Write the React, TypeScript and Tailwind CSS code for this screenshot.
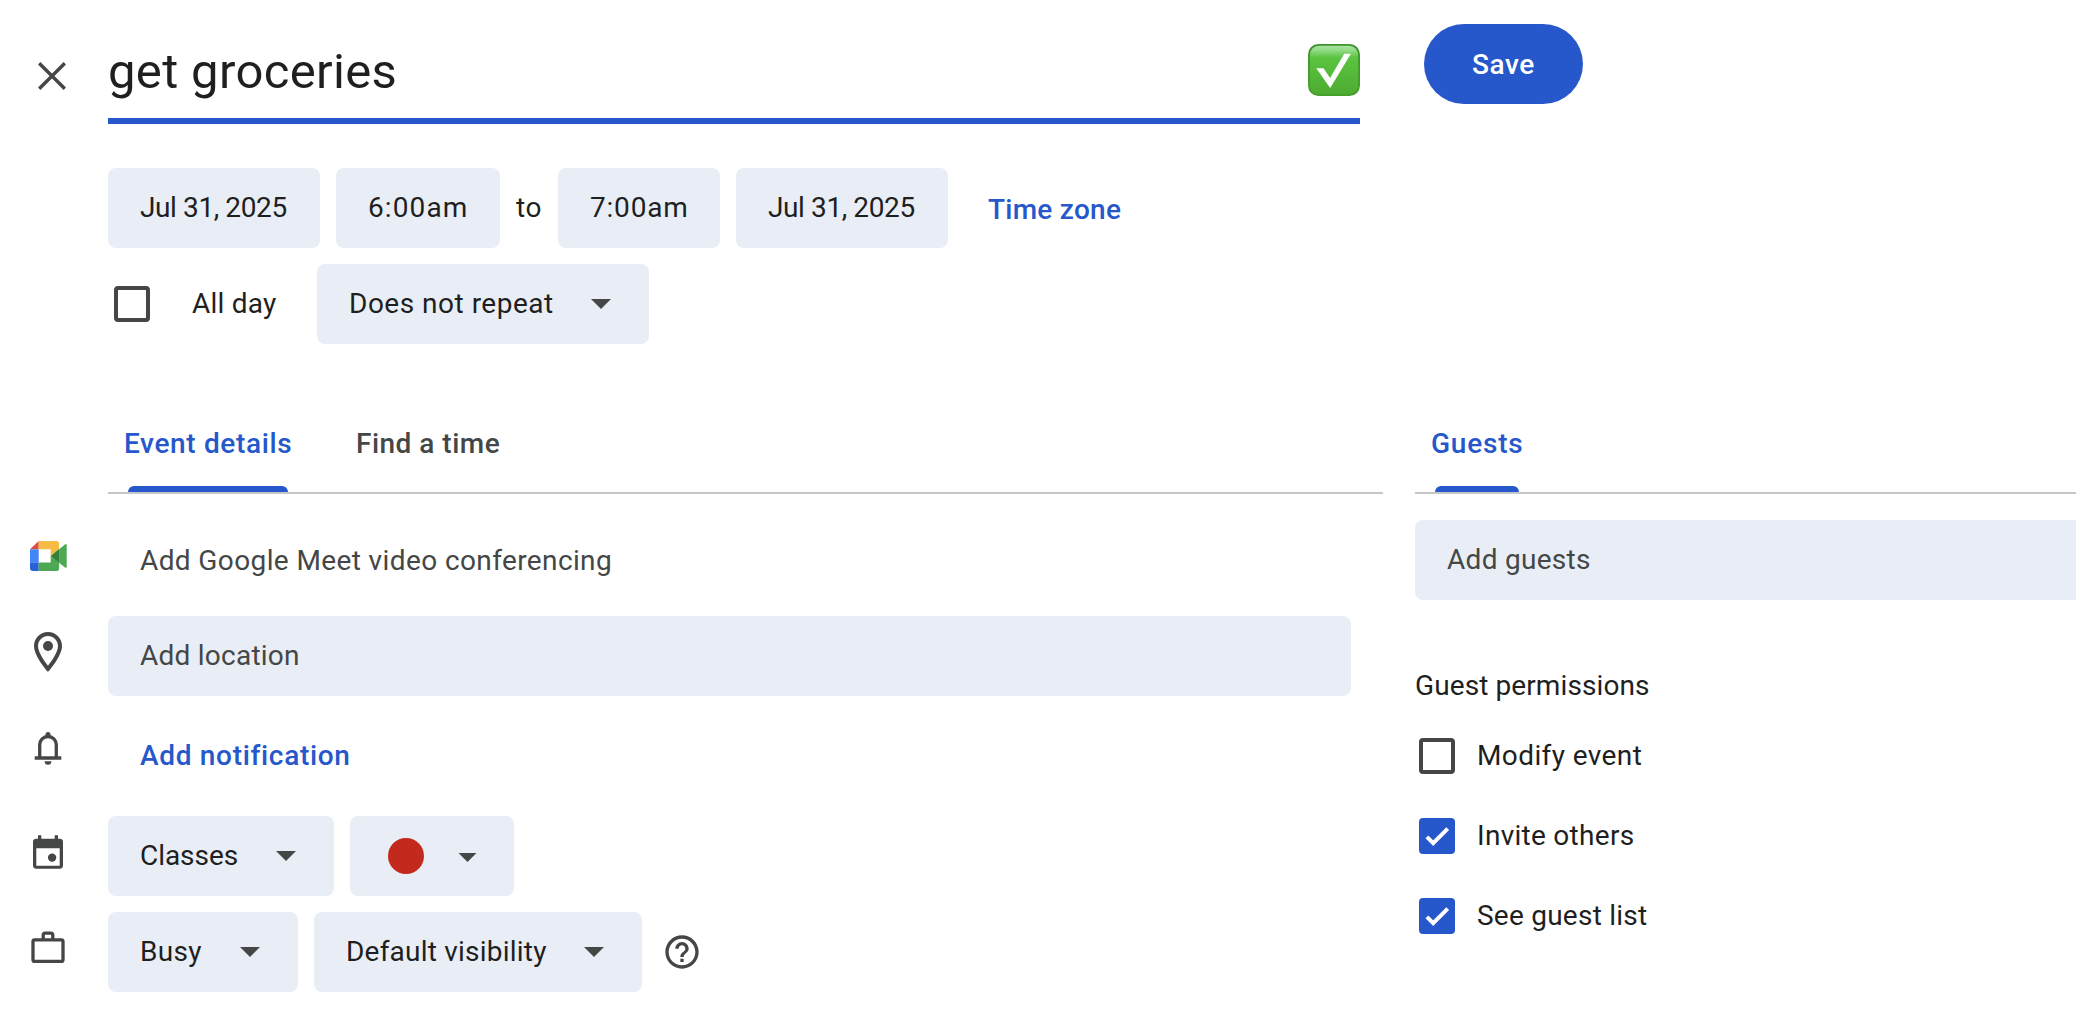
import type { ReactNode } from 'react';

function CloseIcon() {
  return (
    <svg className="size-10" viewBox="0 0 40 40" fill="none" stroke="#444746" strokeWidth="3.4">
      <path d="M7.2 7.2 32.8 32.8M32.8 7.2 7.2 32.8" />
    </svg>
  );
}

function CheckEmoji() {
  return (
    <svg className="size-[52px]" viewBox="0 0 52 52" role="img" aria-label="Completed">
      <defs>
        <linearGradient id="emojiFill" x1="0" y1="0" x2="0" y2="1">
          <stop offset="0" stopColor="#a5e3a0" />
          <stop offset="0.09" stopColor="#93dc88" />
          <stop offset="0.24" stopColor="#5bc440" />
          <stop offset="1" stopColor="#4dab31" />
        </linearGradient>
        <linearGradient id="emojiEdge" x1="0" y1="0" x2="0" y2="1">
          <stop offset="0" stopColor="#3f922c" />
          <stop offset="1" stopColor="#469f2b" />
        </linearGradient>
      </defs>
      <rect width="52" height="52" rx="10.5" fill="url(#emojiEdge)" />
      <rect x="1.8" y="1.8" width="48.4" height="48.4" rx="9" fill="url(#emojiFill)" />
      <path d="M8.3 24.2h7.2l6.6 9.8L36.2 9.8h6.7L22.2 44z" fill="#fff" />
    </svg>
  );
}

function MeetIcon() {
  return (
    <svg className="m-1 size-10" viewBox="0 0 40 40">
      <path d="M2 13.3 10.7 5v8.3z" fill="#dd4b3e" />
      <path d="M2 13.3h8.7v13.3H2z" fill="#4285f4" />
      <path d="M2 26.6h8.7V35H5a3 3 0 0 1-3-3z" fill="#2862d6" />
      <path d="M10.7 5h17.6a2.8 2.8 0 0 1 2.8 2.8v5.4L22.7 20v-6.7h-12z" fill="#f6bb42" />
      <path d="M10.7 26.6h12V20l8.4 6.8v5.4a2.8 2.8 0 0 1-2.8 2.8H10.7z" fill="#4ca853" />
      <path d="M22.7 20 31.1 13v14z" fill="#34803b" />
      <path d="M31.1 13.2 37 8.4q1.7-1 1.7 1v21.200q0 2-1.7 1l-5.900-4.800z" fill="#4ca853" />
    </svg>
  );
}

function PinIcon() {
  return (
    <svg className="size-12" viewBox="0 0 24 24" fill="#444746">
      <path d="M12 2C8.130 2 5 5.130 5 9c0 5.250 7 13 7 13s7-7.750 7-13c0-3.870-3.130-7-7-7zM7 9c0-2.760 2.240-5 5-5s5 2.240 5 5c0 2.880-2.880 7.190-5 9.880C9.920 16.210 7 11.850 7 9z" />
      <circle cx="12" cy="9" r="2.5" />
    </svg>
  );
}

function BellIcon() {
  return (
    <svg className="m-1 size-10" viewBox="0 0 40 40" fill="#444746">
      <path d="M11.700 29V16.800a8.300 8.300 0 0 1 16.600 0V29" fill="none" stroke="#444746" strokeWidth="3.3" />
      <path d="M6.700 28.300h26.600v3.400H6.700zM17.500 9V6.500a2.500 2.500 0 0 1 5 0V9zM16.600 33.300h6.800a3.400 3.400 0 0 1-6.800 0z" />
    </svg>
  );
}

function CalendarIcon() {
  return (
    <svg className="m-1 size-10" viewBox="0 0 40 40" fill="#444746">
      <path
        fillRule="evenodd"
        d="M10 3.300h3.300v3.400h13.400V3.300H30v3.400h1.700A3.300 3.300 0 0 1 35 10v23.300a3.300 3.300 0 0 1-3.300 3.400H8.300A3.300 3.300 0 0 1 5 33.300V10a3.300 3.300 0 0 1 3.300-3.300H10zM8.300 16.300v17.400h23.400V16.300z"
      />
      <circle cx="24.1" cy="25.6" r="4.2" />
    </svg>
  );
}

function BriefcaseIcon() {
  return (
    <svg className="m-1 size-10" viewBox="0 0 40 40" fill="none" stroke="#444746" strokeWidth="3.3">
      <rect x="5" y="11.8" width="30" height="21.6" rx="1.7" />
      <path d="M15.200 11.500V7.200q0-2 2-2h5.600q2 0 2 2v4.300" />
    </svg>
  );
}

function HelpIcon() {
  return (
    <svg className="size-10" viewBox="0 0 24 24" fill="#444746">
      <path d="M11 18h2v-2h-2v2zm1-16C6.480 2 2 6.480 2 12s4.480 10 10 10 10-4.480 10-10S17.520 2 12 2zm0 18c-4.410 0-8-3.590-8-8s3.590-8 8-8 8 3.590 8 8-3.590 8-8 8zm0-14c-2.210 0-4 1.790-4 4h2c0-1.100.9-2 2-2s2 .9 2 2c0 2-3 1.750-3 5h2c0-2.250 3-2.500 3-5 0-2.210-1.790-4-4-4z" />
    </svg>
  );
}

function Caret({ small = false }: { small?: boolean }) {
  return small ? (
    <svg className="mt-[2px] h-[9px] w-[19px]" viewBox="0 0 20 10" fill="#444746">
      <path d="M0 0h20L10 10z" />
    </svg>
  ) : (
    <svg className="h-[10px] w-5" viewBox="0 0 20 10" fill="#444746">
      <path d="M0 0h20L10 10z" />
    </svg>
  );
}

function Chip({ className, children }: { className: string; children: ReactNode }) {
  return (
    <button className={`flex h-20 shrink-0 items-center rounded-lg bg-[#e9eef6] whitespace-nowrap ${className}`}>
      {children}
    </button>
  );
}

function Checkbox({ checked = false }: { checked?: boolean }) {
  return checked ? (
    <span className="flex size-9 shrink-0 items-center justify-center rounded-[4px] bg-[#2657cb]">
      <svg className="size-9" viewBox="0 0 36 36" fill="none" stroke="#fff" strokeWidth="4">
        <path d="m7.900 18.800 6.300 6.300L28.700 10.600" />
      </svg>
    </span>
  ) : (
    <span className="size-9 shrink-0 rounded-[4px] border-4 border-[#444746]" />
  );
}

function DetailRow({ icon, children, className = 'h-20' }: { icon: ReactNode; children: ReactNode; className?: string }) {
  return (
    <div className={`flex ${className}`}>
      <div className="w-[108px] shrink-0 pt-3 pl-6">{icon}</div>
      {children}
    </div>
  );
}

function Permission({ label, checked, className }: { label: string; checked?: boolean; className: string }) {
  return (
    <label className="flex h-20 items-center pl-1">
      <Checkbox checked={checked} />
      <span className={`ml-[22px] ${className}`}>{label}</span>
    </label>
  );
}

export default function App() {
  return (
    <div className="h-[1014px] w-full overflow-hidden bg-white font-[Roboto,sans-serif] text-[28px] leading-8 text-[#1f1f1f]">
      <header className="flex h-[124px]">
        <div className="w-[108px] shrink-0 pt-14 pl-8">
          <CloseIcon />
        </div>
        <div className="flex w-[1252px] justify-between border-b-[6px] border-[#2657cb]">
          <h1 className="pt-[44px] text-[49px] leading-[56px] font-normal tracking-[0.35px]">get groceries</h1>
          <div className="pt-11">
            <CheckEmoji />
          </div>
        </div>
        <button className="mt-6 ml-16 flex h-20 w-[159px] items-center justify-center rounded-full bg-[#2657cb] pt-px font-medium tracking-[0.58px] text-white">
          Save
        </button>
      </header>

      <section className="mt-11 flex flex-col gap-4 pl-[108px]">
        <div className="flex h-20 items-center">
          <Chip className="w-[212px] pl-8 tracking-[-0.4px]">Jul 31, 2025</Chip>
          <Chip className="ml-4 w-[164px] pl-8 tracking-[1.1px]">6:00am</Chip>
          <span className="ml-4 w-[42px] tracking-[0.6px]">to</span>
          <Chip className="w-[162px] pl-8 tracking-[0.8px]">7:00am</Chip>
          <Chip className="ml-4 w-[212px] pl-8 tracking-[-0.4px]">Jul 31, 2025</Chip>
          <button className="ml-[40px] pt-[3px] font-medium tracking-[0.25px] text-[#2657cb]">Time zone</button>
        </div>
        <div className="flex h-20 items-center">
          <div className="flex w-[209px] items-center pl-1.5">
            <Checkbox />
            <span className="ml-[42px] tracking-[0.23px]">All day</span>
          </div>
          <Chip className="w-[332px] justify-between pr-[38px] pl-8 tracking-[0.5px]">
            Does not repeat
            <Caret />
          </Chip>
        </div>
      </section>

      <div className="mt-[52px] flex gap-8">
        <main className="w-[1383px] shrink-0">
          <nav className="ml-[108px] flex h-[98px] border-b-2 border-[#c7c7c7] font-medium">
            <div className="relative w-[232px] pt-8 pl-4 tracking-[0.65px] text-[#2657cb]">
              Event details
              <span className="absolute bottom-0 left-5 h-1.5 w-40 rounded-t-[6px] bg-[#2657cb]" />
            </div>
            <div className="pt-8 pl-4 tracking-[0.49px] text-[#444746]">Find a time</div>
          </nav>

          <div className="mt-[26px] flex flex-col gap-4">
            <DetailRow icon={<MeetIcon />}>
              <span className="self-center pt-px pl-8 tracking-[0.39px] text-[#444746]">
                Add Google Meet video conferencing
              </span>
            </DetailRow>
            <DetailRow icon={<PinIcon />}>
              <div className="flex h-20 w-[1243px] items-center rounded-lg bg-[#e9eef6] pb-px pl-8 tracking-[0.24px] text-[#444746]">
                Add location
              </div>
            </DetailRow>
            <DetailRow icon={<BellIcon />} className="h-[88px]">
              <button className="self-center pl-8 font-medium tracking-[0.68px] text-[#2657cb]">
                Add notification
              </button>
            </DetailRow>
            <DetailRow icon={<CalendarIcon />}>
              <div className="flex gap-4">
                <Chip className="w-[226px] justify-between pr-[38px] pl-8 tracking-[-0.05px]">
                  Classes
                  <Caret />
                </Chip>
                <Chip className="w-[164px] pl-[38px]">
                  <span className="mr-[34px] size-9 rounded-full bg-[#c3291c]" />
                  <Caret small />
                </Chip>
              </div>
            </DetailRow>
            <DetailRow icon={<BriefcaseIcon />}>
              <div className="flex items-center gap-4">
                <Chip className="w-[190px] justify-between pr-[38px] pl-8 tracking-[0.32px]">
                  Busy
                  <Caret />
                </Chip>
                <Chip className="w-[328px] justify-between pr-[38px] pl-8 tracking-[0.22px]">
                  Default visibility
                  <Caret />
                </Chip>
                <button className="ml-1">
                  <HelpIcon />
                </button>
              </div>
            </DetailRow>
          </div>
        </main>

        <aside className="min-w-0 flex-1">
          <nav className="flex h-[98px] border-b-2 border-[#c7c7c7] font-medium">
            <div className="relative w-[120px] pt-8 pl-4 tracking-[0.78px] text-[#2657cb]">
              Guests
              <span className="absolute bottom-0 left-5 h-1.5 w-[84px] rounded-t-[6px] bg-[#2657cb]" />
            </div>
          </nav>
          <div className="mt-[26px] flex h-20 items-center rounded-l-lg bg-[#e9eef6] pb-px pl-8 tracking-[0.29px] text-[#444746]">
            Add guests
          </div>
          <h2 className="mt-[70px] mb-[14px] tracking-[0.1px]">Guest permissions</h2>
          <div className="flex flex-col">
            <Permission label="Modify event" className="tracking-[0.4px]" />
            <Permission label="Invite others" checked className="tracking-[0.28px]" />
            <Permission label="See guest list" checked className="tracking-[0.24px]" />
          </div>
        </aside>
      </div>
    </div>
  );
}
